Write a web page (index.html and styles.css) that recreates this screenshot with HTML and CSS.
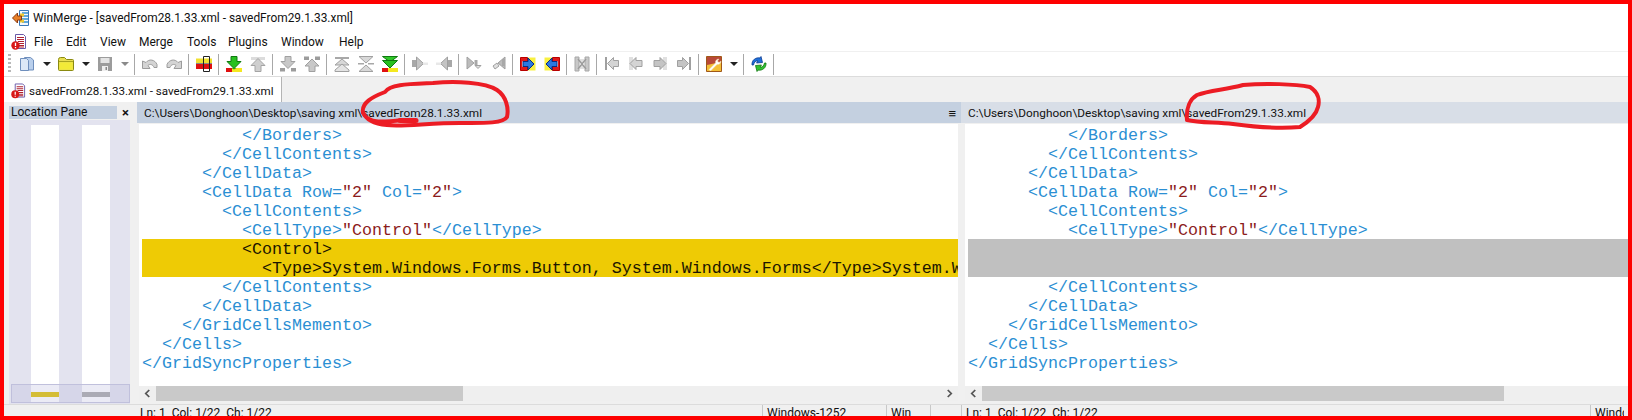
FILE: index.html
```html
<!DOCTYPE html>
<html lang="en">
<head>
<meta charset="utf-8">
<title>WinMerge</title>
<link rel="stylesheet" href="styles.css">
</head>
<body>
<svg class="defs" width="0" height="0" aria-hidden="true">
  <defs>
    <symbol id="doc-alert" viewBox="0 0 16 16">
      <path d="M4.5.5h8l2 2v12h-10z" fill="#fff" stroke="#6a5aa8"/>
      <path d="M6 3.5h7M6 5.5h7M7 7.5h6M8 9.5h5M8 11.5h5M8 13h5" stroke="#b02030" stroke-width="1.1"/>
      <circle cx="4.5" cy="11.5" r="4.2" fill="#d81818"/>
      <path d="M4.5 8.8v3.2M4.5 13v1.2" stroke="#fff" stroke-width="1.3"/>
    </symbol>
    <symbol id="new" viewBox="0 0 16 16">
      <path d="M5.5 1.500h6l3 2.500v10h-9z" fill="#b9cfec" stroke="#6f8fbd"/>
      <path d="M1.500 2.500h6l2 2v10h-8z" fill="#dce8f7" stroke="#6f8fbd"/>
    </symbol>
    <symbol id="open" viewBox="0 0 16 16">
      <path d="M.5 3.500q0-2 2-2h4l2 2h6q1 0 1 1v9q0 1-1 1h-13q-1 0-1-1z" fill="#e8de50" stroke="#8a8a10"/>
      <path d="M1.500 6.500h13v7h-13z" fill="#f2ea38"/>
      <path d="M1 5.500h14" stroke="#a8a420"/>
    </symbol>
    <symbol id="save" viewBox="0 0 16 16">
      <path d="M1 1h14v14h-14z" fill="#9c9c9c"/>
      <path d="M3.500 2h9v5h-9z" fill="#e4e4e4"/>
      <path d="M5 10h6v5h-6z" fill="#efefef"/>
      <path d="M8.500 11h1.500v3h-1.500z" fill="#888"/>
    </symbol>
    <symbol id="undo" viewBox="0 0 16 16">
      <path d="M4 6.500c3-4 9-3 11 2v3h-3c-1-3-4-4-6-2l2 3h-7.500v-7.500z" fill="#d4d4d4" stroke="#9c9c9c"/>
    </symbol>
    <symbol id="redo" viewBox="0 0 16 16">
      <path d="M12 6.500c-3-4-9-3-11 2v3h3c1-3 4-4 6-2l-2 3h7.500v-7.500z" fill="#d4d4d4" stroke="#9c9c9c"/>
    </symbol>
    <symbol id="bars" viewBox="0 0 16 16">
      <path d="M0 2.500h16v5h-16z" fill="#f0e030"/>
      <path d="M0 8h16v5h-16z" fill="#e01010"/>
      <path d="M0 7.500h16" stroke="#888"/>
      <path d="M7.500.5h6v15h-6z" fill="none" stroke="#222"/>
    </symbol>
    <symbol id="next-on" viewBox="0 0 16 16">
      <path d="M5 .5h6v5h4l-7 7-7-7h4z" fill="#28c020" stroke="#0f7a10"/>
      <path d="M0 12h6v4h-6z" fill="#e01010"/>
      <path d="M6 12h10v4h-10z" fill="#f4e820"/>
      <path d="M5.500 12l2.500 1.500 2.500-1.500z" fill="#2a9a20"/>
    </symbol>
    <symbol id="prev-off" viewBox="0 0 16 16">
      <path d="M1 1h14v3h-14z" fill="#dcdcdc"/>
      <path d="M8 2.500l7 7h-4v6h-6v-6h-4z" fill="#cfcfcf" stroke="#a4a4a4"/>
    </symbol>
    <symbol id="next-off" viewBox="0 0 16 16">
      <path d="M5 .5h6v5h4l-7 7-7-7h4z" fill="#c8c8c8" stroke="#a0a0a0"/>
      <path d="M0 12h5v3.500h-5zM11 12h5v3.500h-5z" fill="#9c9c9c"/>
    </symbol>
    <symbol id="up-off" viewBox="0 0 16 16">
      <path d="M0 .5h5v3.500h-5zM11 .5h5v3.500h-5z" fill="#9c9c9c"/>
      <path d="M8 3l7 7h-4v5.500h-6v-5.500h-4z" fill="#c8c8c8" stroke="#a0a0a0"/>
    </symbol>
    <symbol id="first-off" viewBox="0 0 16 16">
      <path d="M1 1h14v2h-14z" fill="#a8a8a8"/>
      <path d="M8 3l7 6h-14z" fill="#d8d8d8" stroke="#a0a0a0"/>
      <path d="M8 8l7 6v1.500h-14v-1.500z" fill="#e4e4e4" stroke="#a0a0a0"/>
    </symbol>
    <symbol id="last-off" viewBox="0 0 16 16">
      <path d="M1 .5h14l-7 6.500z" fill="#d8d8d8" stroke="#a0a0a0"/>
      <path d="M8 9l7 6.500h-14z" fill="#d8d8d8" stroke="#a0a0a0"/>
      <path d="M0 7h6v1.500h-6zM10 7h6v1.500h-6z" fill="#a8a8a8"/>
    </symbol>
    <symbol id="all-on" viewBox="0 0 16 16">
      <path d="M.5 .5h15l-7.500 5.500z" fill="#30c828" stroke="#0f7a10"/>
      <path d="M.5 4.500h15l-7.500 7.500z" fill="#28c020" stroke="#0f7a10"/>
      <path d="M0 12h6v4h-6z" fill="#e01010"/>
      <path d="M6 12h10v4h-10z" fill="#f4e820"/>
    </symbol>
    <symbol id="r-off" viewBox="0 0 16 16">
      <path d="M0 4h4v7h-4z" fill="#a8a8a8"/>
      <path d="M4.500 1v13l7-6.500z" fill="#c4c4c4" stroke="#a0a0a0"/>
      <path d="M11 6.500h5v2.500h-5z" fill="#e8e8e8"/>
    </symbol>
    <symbol id="l-off" viewBox="0 0 16 16">
      <path d="M12 4h4v7h-4z" fill="#a8a8a8"/>
      <path d="M11.500 1v13l-7-6.500z" fill="#c4c4c4" stroke="#a0a0a0"/>
      <path d="M0 6.500h5v2.500h-5z" fill="#e8e8e8"/>
    </symbol>
    <symbol id="r-adv" viewBox="0 0 16 16">
      <path d="M1 1l7 6-7 6z" fill="#bcbcbc" stroke="#a0a0a0"/>
      <path d="M8.500 4h3v5h-3z" fill="#a8a8a8"/>
      <path d="M9 9.500l3 3 3-3z" fill="#e0e0e0" stroke="#a0a0a0"/>
    </symbol>
    <symbol id="l-adv" viewBox="0 0 16 16">
      <path d="M15 1l-7 6 7 6z" fill="#bcbcbc" stroke="#a0a0a0"/>
      <path d="M7 7l-4 3 2 3 4-3z" fill="#e0e0e0" stroke="#a0a0a0"/>
      <path d="M12 3h3v7h-3z" fill="#a8a8a8"/>
    </symbol>
    <symbol id="copy-r" viewBox="0 0 16 16">
      <path d="M.5 1.500h7v13h-7z" fill="#e01818" stroke="#b80000"/>
      <path d="M8 1.500h7.500v13h-7.500z" fill="#f8f040"/>
      <path d="M2 5.500h2v5h-2z" fill="#fff"/>
      <path d="M3 5.500h5v-3.500l6 6-6 6v-3.500h-5z" fill="#2a78e0" stroke="#0a2a80"/>
    </symbol>
    <symbol id="copy-l" viewBox="0 0 16 16">
      <path d="M8.500 1.500h7v13h-7z" fill="#e01818" stroke="#b80000"/>
      <path d="M.5 1.500h7.500v13h-7.500z" fill="#f8f040"/>
      <path d="M12 5.500h2v5h-2z" fill="#fff"/>
      <path d="M13 5.500h-5v-3.500l-6 6 6 6v-3.500h5z" fill="#2a78e0" stroke="#0a2a80"/>
    </symbol>
    <symbol id="merge-off" viewBox="0 0 16 16">
      <path d="M1 1h4v14h-4zM11 1h4v14h-4z" fill="#c8c8c8" stroke="#a8a8a8"/>
      <path d="M4 3l4 5 4-5M4 13l4-5 4 5" fill="#e0e0e0" stroke="#9c9c9c" stroke-width="1.500"/>
    </symbol>
    <symbol id="first-file" viewBox="0 0 16 16">
      <path d="M1 1h2v13h-2z" fill="#a0a0a0"/>
      <path d="M3.500 7.500l6-6v3h5v6h-5v3z" fill="#d4d4d4" stroke="#a0a0a0"/>
    </symbol>
    <symbol id="prev-file" viewBox="0 0 16 16">
      <path d="M1 1h4v13h-4z" fill="#e0e0e0"/>
      <path d="M2 7.500l6-6v3h6v6h-6v3z" fill="#d4d4d4" stroke="#a0a0a0"/>
    </symbol>
    <symbol id="next-file" viewBox="0 0 16 16">
      <path d="M11 1h4v13h-4z" fill="#e0e0e0"/>
      <path d="M14 7.500l-6-6v3h-6v6h6v3z" fill="#c4c4c4" stroke="#a0a0a0"/>
    </symbol>
    <symbol id="last-file" viewBox="0 0 16 16">
      <path d="M13 1h2v13h-2z" fill="#a0a0a0"/>
      <path d="M12.500 7.500l-6-6v3h-5v6h5v3z" fill="#c4c4c4" stroke="#a0a0a0"/>
    </symbol>
    <symbol id="options" viewBox="0 0 16 16">
      <path d="M.5.5h15v15h-15z" fill="#f0a030" stroke="#a05818"/>
      <path d="M1 1h14v6l-14 3z" fill="#b84838"/>
      <path d="M1 9l14-3v9h-14z" fill="#f4c038"/>
      <path d="M3 13.500l6.500-6.500c-.5-2 1-4 3.500-4l-1.500 2 1.500 1.500 2-1.500c0 2.500-2 4-4 3.500l-6.500 6.500z" fill="#fff" stroke="#f0d8a0" stroke-width=".5"/>
    </symbol>
    <symbol id="refresh" viewBox="0 0 16 16">
      <path d="M1 9c-.5-5 4-8 8-7l1-1.500 1.500 6-6 .5 1.500-2c-2-.5-4 1-4.500 4z" fill="#1f6fd8" stroke="#0a3a90" stroke-width=".8"/>
      <path d="M15 7c.5 5-4 8-8 7l-1 1.500-1.500-6 6-.5-1.500 2c2 .5 4-1 4.500-4z" fill="#30c030" stroke="#107a10" stroke-width=".8"/>
    </symbol>
    <symbol id="winmerge" viewBox="0 0 18 18">
      <path d="M7.500 1.500h9v15h-9z" fill="#f4f8fc" stroke="#3a78b8"/>
      <path d="M10 4h6M10 7h6M10 10h6M10 13h6" stroke="#2f8fd0" stroke-width="1.500"/>
      <path d="M8 4.500h4v3h-4zM8 10.500h4v3h-4z" fill="#f0c830"/>
      <path d="M.5 9l5-5v3h4v4h-4v3z" fill="#e88028" stroke="#8a3a10"/>
    </symbol>
    <symbol id="chev-l" viewBox="0 0 8 10">
      <path d="M6 1l-4 4 4 4" fill="none" stroke="#555" stroke-width="2"/>
    </symbol>
    <symbol id="chev-r" viewBox="0 0 8 10">
      <path d="M2 1l4 4-4 4" fill="none" stroke="#555" stroke-width="2"/>
    </symbol>
  </defs>
</svg>

<div class="app">
  <header class="titlebar">
    <svg class="title-icon"><use href="#winmerge"/></svg>
    <span class="title-text">WinMerge - [savedFrom28.1.33.xml - savedFrom29.1.33.xml]</span>
  </header>

  <nav class="menubar">
    <svg class="menu-icon"><use href="#doc-alert"/></svg>
    <span class="menu-item m-file">File</span>
    <span class="menu-item m-edit">Edit</span>
    <span class="menu-item m-view">View</span>
    <span class="menu-item m-merge">Merge</span>
    <span class="menu-item m-tools">Tools</span>
    <span class="menu-item m-plugins">Plugins</span>
    <span class="menu-item m-window">Window</span>
    <span class="menu-item">Help</span>
  </nav>

  <div class="toolbar">
    <span class="gripper"></span>
    <span class="btn"><svg><use href="#new"/></svg></span><span class="drop"></span>
    <span class="btn"><svg><use href="#open"/></svg></span><span class="drop"></span>
    <span class="btn"><svg><use href="#save"/></svg></span><span class="drop dim"></span>
    <span class="sep"></span>
    <span class="btn"><svg><use href="#undo"/></svg></span>
    <span class="btn"><svg><use href="#redo"/></svg></span>
    <span class="sep"></span>
    <span class="btn"><svg><use href="#bars"/></svg></span>
    <span class="sep"></span>
    <span class="btn"><svg><use href="#next-on"/></svg></span>
    <span class="btn"><svg><use href="#prev-off"/></svg></span>
    <span class="sep"></span>
    <span class="btn"><svg><use href="#next-off"/></svg></span>
    <span class="btn"><svg><use href="#up-off"/></svg></span>
    <span class="sep"></span>
    <span class="btn"><svg><use href="#first-off"/></svg></span>
    <span class="btn"><svg><use href="#last-off"/></svg></span>
    <span class="btn"><svg><use href="#all-on"/></svg></span>
    <span class="sep"></span>
    <span class="btn"><svg><use href="#r-off"/></svg></span>
    <span class="btn"><svg><use href="#l-off"/></svg></span>
    <span class="sep"></span>
    <span class="btn"><svg><use href="#r-adv"/></svg></span>
    <span class="btn"><svg><use href="#l-adv"/></svg></span>
    <span class="sep"></span>
    <span class="btn"><svg><use href="#copy-r"/></svg></span>
    <span class="btn"><svg><use href="#copy-l"/></svg></span>
    <span class="sep"></span>
    <span class="btn"><svg><use href="#merge-off"/></svg></span>
    <span class="sep"></span>
    <span class="btn"><svg><use href="#first-file"/></svg></span>
    <span class="btn"><svg><use href="#prev-file"/></svg></span>
    <span class="btn"><svg><use href="#next-file"/></svg></span>
    <span class="btn"><svg><use href="#last-file"/></svg></span>
    <span class="sep"></span>
    <span class="btn"><svg><use href="#options"/></svg></span><span class="drop"></span>
    <span class="sep"></span>
    <span class="btn"><svg><use href="#refresh"/></svg></span>
    <span class="sep"></span>
  </div>

  <div class="tabstrip">
    <div class="tab">
      <svg class="tab-icon"><use href="#doc-alert"/></svg>
      <span>savedFrom28.1.33.xml - savedFrom29.1.33.xml</span>
    </div>
  </div>

  <main class="workspace">
    <aside class="location">
      <div class="loc-head">
        <span class="loc-title">Location Pane</span>
        <span class="loc-close">×</span>
      </div>
      <div class="loc-map">
        <div class="loc-col"></div>
        <div class="loc-col file"><span class="mark yellow"></span></div>
        <div class="loc-col"></div>
        <div class="loc-col file"><span class="mark gray"></span></div>
        <div class="loc-col"></div>
        <div class="loc-view"></div>
      </div>
    </aside>

    <section class="pane pane-left">
      <div class="pane-head active">
        <span>C:\Users\Donghoon\Desktop\saving xml\savedFrom28.1.33.xml</span>
        <span class="burger">≡</span>
      </div>
      <div class="pane-body">
<pre class="code"><span class="t">          &lt;/Borders&gt;</span>
<span class="t">        &lt;/CellContents&gt;</span>
<span class="t">      &lt;/CellData&gt;</span>
<span class="t">      &lt;CellData Row=<span class="v">"2"</span> Col=<span class="v">"2"</span>&gt;</span>
<span class="t">        &lt;CellContents&gt;</span>
<span class="t">          &lt;CellType&gt;<span class="v">"Control"</span>&lt;/CellType&gt;</span>
<span class="diff yellow-row">          &lt;Control&gt;
            &lt;Type&gt;System.Windows.Forms.Button, System.Windows.Forms&lt;/Type&gt;System.Windows.Forms.Button</span><span class="t">        &lt;/CellContents&gt;</span>
<span class="t">      &lt;/CellData&gt;</span>
<span class="t">    &lt;/GridCellsMemento&gt;</span>
<span class="t">  &lt;/Cells&gt;</span>
<span class="t">&lt;/GridSyncProperties&gt;</span></pre>
      </div>
      <div class="hscroll">
        <svg class="chev"><use href="#chev-l"/></svg>
        <span class="thumb thumb-left"></span>
        <svg class="chev end"><use href="#chev-r"/></svg>
      </div>
    </section>

    <section class="pane pane-right">
      <div class="pane-head">
        <span>C:\Users\Donghoon\Desktop\saving xml\savedFrom29.1.33.xml</span>
      </div>
      <div class="pane-body">
<pre class="code"><span class="t">          &lt;/Borders&gt;</span>
<span class="t">        &lt;/CellContents&gt;</span>
<span class="t">      &lt;/CellData&gt;</span>
<span class="t">      &lt;CellData Row=<span class="v">"2"</span> Col=<span class="v">"2"</span>&gt;</span>
<span class="t">        &lt;CellContents&gt;</span>
<span class="t">          &lt;CellType&gt;<span class="v">"Control"</span>&lt;/CellType&gt;</span>
<span class="diff gray-row"> 
 </span><span class="t">        &lt;/CellContents&gt;</span>
<span class="t">      &lt;/CellData&gt;</span>
<span class="t">    &lt;/GridCellsMemento&gt;</span>
<span class="t">  &lt;/Cells&gt;</span>
<span class="t">&lt;/GridSyncProperties&gt;</span></pre>
      </div>
      <div class="hscroll">
        <svg class="chev"><use href="#chev-l"/></svg>
        <span class="thumb thumb-right"></span>
      </div>
    </section>
  </main>

  <footer class="statusbar">
    <span class="cell c1">Ln: 1  Col: 1/22  Ch: 1/22</span>
    <span class="cell c2">Windows-1252</span>
    <span class="cell c3">Win</span>
    <span class="cell c4"></span>
    <span class="cell c5">Ln: 1  Col: 1/22  Ch: 1/22</span>
    <span class="cell c6">Windows-1252</span>
  </footer>
</div>

<svg class="ink" viewBox="0 0 1632 420" aria-hidden="true">
  <path d="M402 120C385 122 368 124 363 113C361 103 372 97 385 92C390 84 410 84 433 83C455 81 485 82 497 90C506 96 509 108 507 117C503 124 480 123 460 123C430 123 400 127 387 125C375 124 366 120 363 112"/>
  <path class="thick" d="M400 120.500h16"/>
  <path d="M1187 120C1186 108 1190 99 1197 95C1210 90 1225 90 1243 85C1265 83 1295 84 1310 87C1318 92 1320 100 1318 107C1316 116 1308 122 1300 127C1280 129 1255 127 1233 124C1215 122 1200 123 1187 120"/>
</svg>
</body>
</html>
```
FILE: styles.css
```css
* { box-sizing: border-box; }

html, body {
  margin: 0;
  height: 100%;
  overflow: hidden;
}

body {
  position: relative;
  width: 1632px;
  height: 420px;
  background: #fff;
  font-family: Roboto, "Open Sans", sans-serif;
  font-size: 12px;
  color: #111;
}

.defs { position: absolute; }

.app {
  display: flex;
  flex-direction: column;
  height: 420px;
  border: 4px solid #fe0000;
  overflow: hidden;
}

/* title + menu */
.titlebar {
  display: flex;
  align-items: center;
  height: 27px;
  flex: none;
  padding-left: 8px;
  font-size: 11.900px;
}

.title-icon { width: 18px; height: 18px; margin-right: 3px; }

.menubar {
  display: flex;
  align-items: center;
  height: 20px;
  flex: none;
  padding-left: 7px;
}

.menu-icon { width: 16px; height: 16px; margin-right: 7px; margin-top: 1px; }

.menu-item { padding-top: 2px; }
.m-file { width: 32px; }
.m-edit { width: 34px; }
.m-view { width: 39px; }
.m-merge { width: 48px; }
.m-tools { width: 41px; }
.m-plugins { width: 53px; }
.m-window { width: 58px; }

/* toolbar */
.toolbar {
  display: flex;
  align-items: center;
  flex: none;
  height: 26px;
  padding-left: 4px;
  border-top: 1px solid #f0f0f0;
  border-bottom: 1px solid #dcdcdc;
}

.gripper {
  width: 3px;
  height: 20px;
  margin-right: 4px;
  background: repeating-linear-gradient(to bottom, #b8b8b8 0 2px, transparent 2px 4px);
}

.btn {
  display: flex;
  align-items: center;
  justify-content: center;
  width: 24px;
  height: 24px;
}

.btn svg { width: 16px; height: 16px; }

.drop {
  display: flex;
  align-items: center;
  justify-content: center;
  width: 15px;
  height: 24px;
}

.drop::before {
  content: "";
  border-left: 4px solid transparent;
  border-right: 4px solid transparent;
  border-top: 4px solid #222;
}

.drop.dim::before { border-top-color: #8a8a8a; }

.sep {
  width: 1px;
  height: 21px;
  margin: 0 3px 0 2px;
  background: #a8a8a8;
}

/* tabs */
.tabstrip {
  display: flex;
  flex: none;
  height: 25px;
  background: #f0f0f0;
}

.tab {
  display: flex;
  align-items: center;
  width: 278px;
  padding: 2px 0 0 7px;
  background: #fff;
  border-right: 1px solid #b4b4b4;
  white-space: nowrap;
  font-size: 11.600px;
}

.tab-icon { width: 15px; height: 16px; margin-right: 3px; flex: none; }

/* main area */
.workspace {
  display: grid;
  grid-template-columns: 133px 824px 667px;
  grid-template-rows: minmax(0, 1fr);
  flex: none;
  height: 302px;
  background: #f0f0f0;
}

.location { display: flex; flex-direction: column; padding: 3px 3px 0 5px; }

.loc-head {
  display: flex;
  align-items: center;
  height: 14px;
  flex: none;
}

.loc-title {
  flex: 1;
  height: 13px;
  line-height: 13px;
  padding-left: 2px;
  background: #c4d0e0;
  overflow: hidden;
}

.loc-close {
  width: 17px;
  text-align: center;
  font-weight: 700;
  font-size: 13px;
  line-height: 13px;
}

.loc-map {
  position: relative;
  display: grid;
  grid-template-columns: 22px 28px 23px 28px 20px;
  height: 295px;
  margin: 1px 4px 0 0;
  background: #e3e3ef;
}

.loc-col { position: relative; }

.loc-col.file {
  margin-top: 5px;
  margin-bottom: 2px;
  background: #fff;
}

.mark {
  position: absolute;
  left: 0;
  right: 0;
  bottom: 5px;
  height: 5px;
}

.mark.yellow { background: #e1c200; }
.mark.gray { background: #aaa; }

.loc-view {
  position: absolute;
  left: 2px;
  right: 0;
  bottom: 1px;
  height: 19px;
  background: rgba(176, 176, 216, 0.25);
  border: 1px solid #c0c0dc;
}

.pane { display: flex; flex-direction: column; min-width: 0; min-height: 0; }

.pane-head {
  display: flex;
  justify-content: space-between;
  align-items: center;
  flex: none;
  height: 21px;
  padding: 1px 5px 0 7px;
  background: #d8dee7;
  font-size: 11.800px;
}

.pane-head.active { background: #c4d0e0; }
.burger { font-size: 13px; font-weight: 700; }

.pane-body {
  flex: 1;
  min-height: 0;
  overflow: hidden;
  margin-top: 1px;
  padding-top: 2px;
  background: #fff;
}

.pane-left .pane-body { margin-left: 2px; margin-right: 3px; padding-left: 3px; }
.pane-right .pane-body { margin-left: 4px; padding-left: 3px; }

.code {
  margin: 0;
  font-family: "Liberation Mono", monospace;
  font-size: 16.670px;
  line-height: 19px;
}

.t { color: #2b8fd3; }
.v { color: #8c1c1c; }

.diff {
  display: block;
  height: 38px;
  margin: -1px 0 1px;
  padding-top: 1px;
}

.yellow-row { background: #eecb05; color: #1c1600; }
.gray-row { background: #c0c0c0; }

.hscroll {
  display: flex;
  align-items: stretch;
  flex: none;
  height: 15px;
  margin: 0 3px 3px 2px;
  background: #efefef;
}

.pane-right .hscroll { margin-left: 4px; margin-right: 0; }

.chev { width: 17px; height: 15px; padding: 3px 5px; flex: none; }
.chev.end { margin-left: auto; }

.thumb { background: #c9c9c9; }
.thumb-left { width: 307px; }
.thumb-right { width: 522px; }

/* status bar */
.statusbar {
  display: grid;
  grid-template-columns: 758px 124px 44px 31px 629px 34px;
  flex: 1;
  min-height: 0;
  background: #f0f0f0;
  border-top: 1px solid #dcdcdc;
  overflow: hidden;
  white-space: pre;
}

.cell {
  padding: 0 0 0 4px;
  border-left: 1px solid #c8c8c8;
  line-height: 16px;
  overflow: hidden;
}

.c1 { padding-left: 136px; border-left: 0; }

/* hand-drawn annotation */
.ink {
  position: absolute;
  inset: 0;
  width: 1632px;
  height: 420px;
  pointer-events: none;
}

.ink path {
  fill: none;
  stroke: #ec1c24;
  stroke-width: 4;
  stroke-linecap: round;
  stroke-linejoin: round;
}

.ink .thick { stroke-width: 5; }
```
